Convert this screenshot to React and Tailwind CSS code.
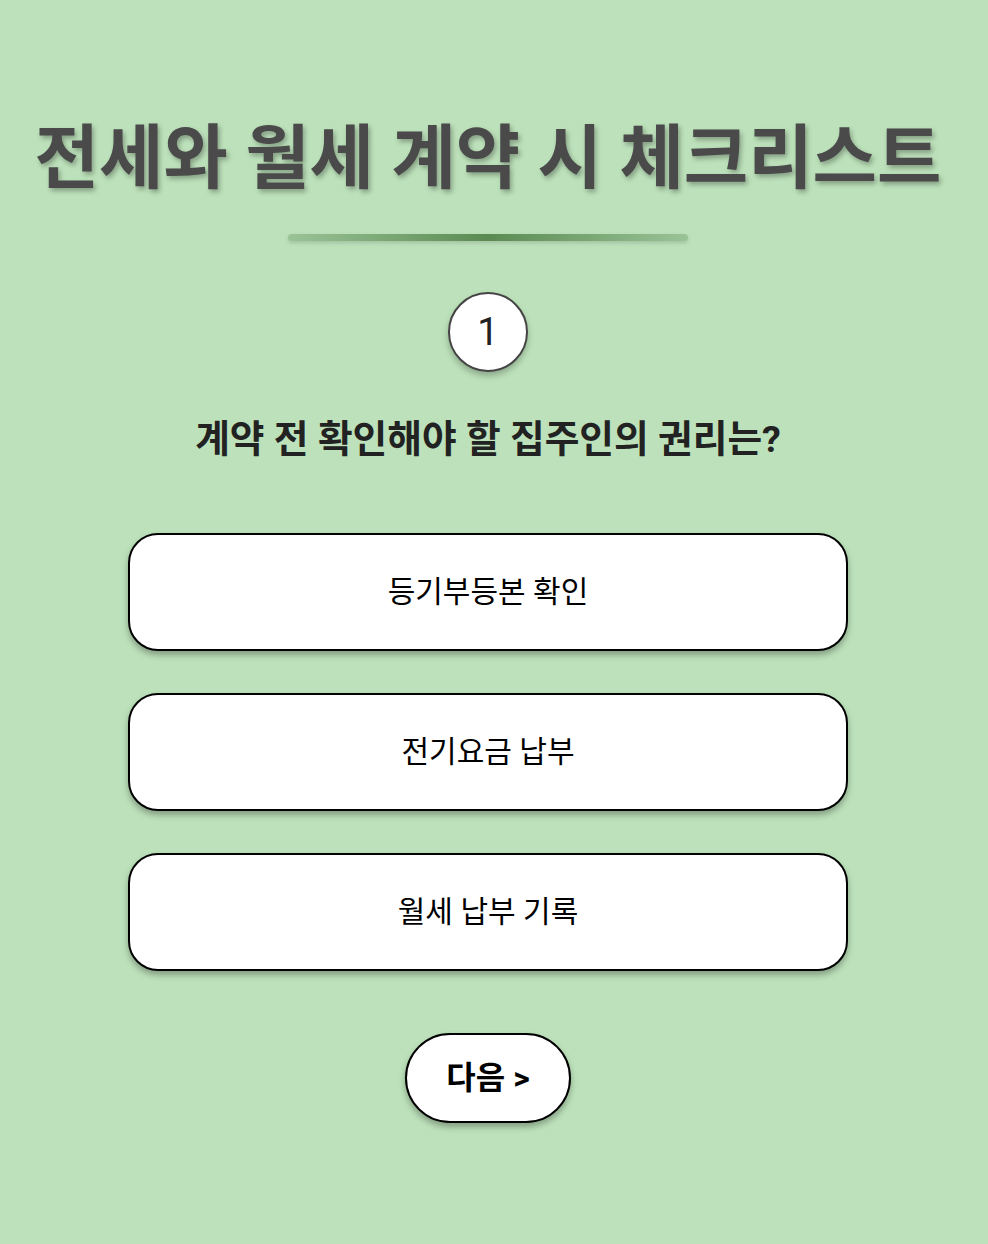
import React, { useState } from "react";

const options = ["등기부등본 확인", "전기요금 납부", "월세 납부 기록"];

const App = () => {
  const [selected, setSelected] = useState(null);

  return (
    <div
      className="min-h-screen w-full bg-[#bde2bb] flex flex-col items-center pt-[124px] pr-[12px]"
      style={{ fontFamily: 'Roboto, "Noto Sans CJK KR", sans-serif' }}
    >
      <h1 className="text-[70px] leading-none font-bold text-[#4a4a4a] [text-shadow:2px_3px_5px_rgba(0,0,0,0.3)]">
        전세와 월세 계약 시 체크리스트
      </h1>
      <div className="mt-[40px] h-[7px] w-[400px] rounded-full bg-[linear-gradient(90deg,rgba(90,138,82,0.35),#5a8a52,rgba(90,138,82,0.35))] shadow-[0_2px_4px_rgba(0,0,0,0.15)]" />

      <div className="mt-[51px] flex h-[80px] w-[80px] items-center justify-center rounded-full border-2 border-[#444] bg-white text-[38px] text-[#222] shadow-[0_4px_6px_rgba(0,0,0,0.25)]">
        1
      </div>

      <h2 className="mt-[49px] text-[37.7px] leading-none font-bold text-[#222]">
        계약 전 확인해야 할 집주인의 권리는?
      </h2>

      <div className="mt-[74px] flex flex-col gap-[42px]">
        {options.map((opt, i) => (
          <button
            key={opt}
            onClick={() => setSelected(i)}
            className={`h-[118px] w-[720px] rounded-[30px] border-2 border-black text-[30px] text-black shadow-[0_4px_6px_rgba(0,0,0,0.3)] ${selected === i ? "bg-[#e8f5e6]" : "bg-white"}`}
          >
            {opt}
          </button>
        ))}
      </div>

      <button className="mt-[62px] h-[90px] w-[166px] rounded-full border-2 border-black bg-white text-[32px] font-bold text-black shadow-[0_4px_6px_rgba(0,0,0,0.3)]">
        다음 &gt;
      </button>
    </div>
  );
};

export default App;
